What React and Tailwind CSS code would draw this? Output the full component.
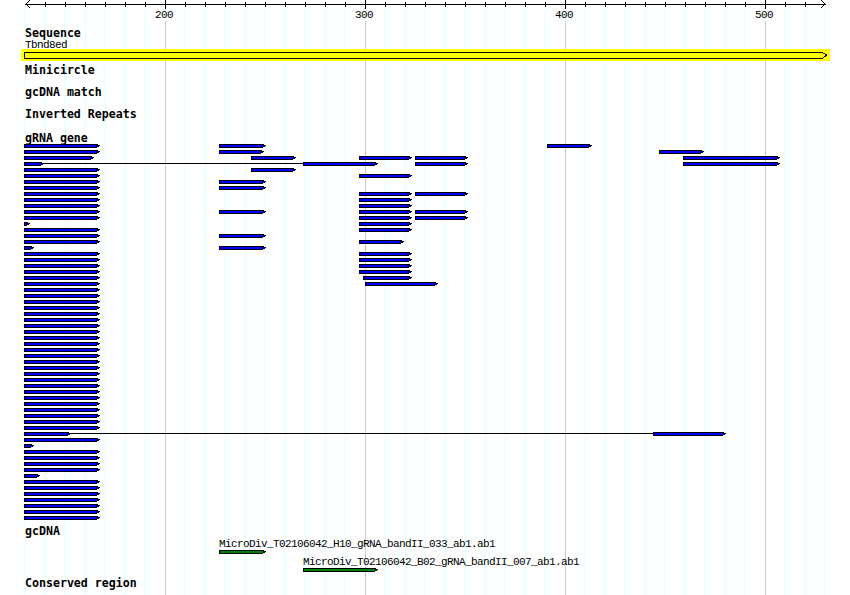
const MAJOR = [165, 365, 565, 765];
const TICK_LABELS = [
    { x: 165, text: "200" },
    { x: 365, text: "300" },
    { x: 565, text: "400" },
    { x: 765, text: "500" },
];

// every 20px between the ruler's two ends
const GRID = Array.from({ length: 41 }, (_, i) => 25 + i * 20);

const ROWS = 63;
const ROW_STEP = 6;
const LEFT_FULL = 100;
// rows where the first feature stops short of the full width
const LEFT_SHORT = { 2: 94, 3: 44, 13: 30, 17: 34, 48: 71, 50: 34, 55: 40 };

// [row, start, tip]
const FEATURES = [
    [0, 219, 266], [0, 547, 592],
    [1, 219, 264], [1, 659, 704],
    [2, 251, 296], [2, 359, 412], [2, 415, 468], [2, 683, 780],
    [3, 303, 378], [3, 415, 468], [3, 683, 780],
    [4, 251, 296],
    [5, 359, 412],
    [6, 219, 266],
    [7, 219, 266],
    [8, 359, 412], [8, 415, 468],
    [9, 359, 412],
    [10, 359, 412],
    [11, 219, 266], [11, 359, 412], [11, 415, 468],
    [12, 359, 412], [12, 415, 468],
    [13, 359, 412],
    [14, 359, 412],
    [15, 219, 266],
    [16, 359, 404],
    [17, 219, 266],
    [18, 359, 412],
    [19, 359, 412],
    [20, 359, 412],
    [21, 359, 412],
    [22, 363, 412],
    [23, 365, 438],
    [48, 653, 726],
];

// [row, from, to]
const CONNECTORS = [
    [3, 44, 303],
    [48, 71, 653],
];

const Feature = ({ y, start, tip, fill }) => (
    <g>
        <rect x={start} y={y} width={tip - start - 2} height={1} fill="#000000" />
        <rect x={start} y={y + 3} width={tip - start - 3} height={1} fill="#000000" />
        <rect x={start} y={y + 1} width={1} height={2} fill="#000000" />
        <rect x={start + 1} y={y + 1} width={tip - start - 4} height={2} fill={fill} />
        <rect x={tip - 3} y={y + 1} width={2} height={2} fill="#000000" />
        <rect x={tip - 1} y={y + 1} width={1} height={1} fill="#000000" />
    </g>
);

const TrackLabel = ({ children, className = "" }) => (
    <div className={`pl-[25px] h-[14px] leading-[14px] text-[11.6px] font-bold text-black whitespace-pre ${className}`}>
        {children}
    </div>
);

const SmallLabel = ({ x, children, className = "" }) => (
    <div
        className={`h-[12px] leading-[12px] font-['Liberation_Mono',monospace] text-[11px] tracking-[-0.6px] text-black whitespace-pre ${className}`}
        style={{ paddingLeft: x }}
    >
        {children}
    </div>
);

const GreenBar = ({ start, tip }) => (
    <svg width="850" height="4" className="block" shapeRendering="crispEdges">
        <Feature y={0} start={start} tip={tip} fill="#008000" />
    </svg>
);

const App = () => {
    const rows = Array.from({ length: ROWS }, (_, i) => i);

    return (
        <div className="relative w-[850px] h-[595px] bg-white overflow-hidden font-['DejaVu_Sans_Mono',monospace]">
            {/* grid lines and the scale behind all the tracks */}
            <svg width="850" height="595" className="absolute inset-0" shapeRendering="crispEdges">
                {GRID.map((x) => (
                    <rect key={x} x={x} y={6} width={1} height={589} fill="#e0ffff" />
                ))}
                {MAJOR.map((x) => (
                    <rect key={x} x={x} y={21} width={1} height={574} fill="#cccccc" />
                ))}
                <rect x={25} y={4} width={801} height={1} fill="#000000" />
                {GRID.slice(1, -1).map((x) => (
                    <rect key={x} x={x} y={2} width={1} height={5} fill="#000000" />
                ))}
                {MAJOR.map((x) => (
                    <rect key={x} x={x} y={0} width={1} height={9} fill="#000000" />
                ))}
                <polyline points="30,0 26,4 30,8" fill="none" stroke="#000000" />
                <polyline points="821,0 825,4 821,8" fill="none" stroke="#000000" />
                {TICK_LABELS.map((t) => (
                    <text
                        key={t.x}
                        x={t.x - 1}
                        y={18}
                        textAnchor="middle"
                        fill="#000000"
                        className="font-['Liberation_Mono',monospace] text-[11px] tracking-[-0.6px]"
                    >
                        {t.text}
                    </text>
                ))}
            </svg>

            <div className="relative flex flex-col pt-[26px]">
                <TrackLabel>Sequence</TrackLabel>
                <div className="pl-[25px] h-[9px] leading-[11px] font-['Liberation_Mono',monospace] text-[11px] tracking-[-0.6px] text-black">
                    Tbnd8ed
                </div>

                <div className="ml-[21px] w-[809px] h-[12px] bg-[#ffff00]">
                    <svg width="809" height="12" className="block" shapeRendering="crispEdges">
                        <polygon
                            points="3.5,3.5 801.5,3.5 805.5,6 801.5,9.5 3.5,9.5"
                            fill="#ffff00"
                            stroke="#000000"
                        />
                    </svg>
                </div>

                <TrackLabel className="mt-[2px]">Minicircle</TrackLabel>
                <TrackLabel className="mt-[8px]">gcDNA match</TrackLabel>
                <TrackLabel className="mt-[8px]">Inverted Repeats</TrackLabel>
                <TrackLabel className="mt-[10px] mb-[-1px]">gRNA gene</TrackLabel>

                <svg width="850" height={ROWS * ROW_STEP} className="relative block" shapeRendering="crispEdges">
                    {CONNECTORS.map(([row, from, to]) => (
                        <rect key={row} x={from} y={row * ROW_STEP + 1} width={to - from} height={1} fill="#000000" />
                    ))}
                    {rows.map((row) => (
                        <Feature
                            key={row}
                            y={row * ROW_STEP}
                            start={24}
                            tip={LEFT_SHORT[row] ?? LEFT_FULL}
                            fill="#0000ff"
                        />
                    ))}
                    {FEATURES.map(([row, start, tip]) => (
                        <Feature key={`${row}-${start}`} y={row * ROW_STEP} start={start} tip={tip} fill="#0000ff" />
                    ))}
                </svg>

                <TrackLabel className="mt-[2px]">gcDNA</TrackLabel>
                <SmallLabel x={219}>MicroDiv_T02106042_H10_gRNA_bandII_033_ab1.ab1</SmallLabel>
                <GreenBar start={219} tip={266} />
                <SmallLabel x={303} className="mt-[2px]">MicroDiv_T02106042_B02_gRNA_bandII_007_ab1.ab1</SmallLabel>
                <GreenBar start={303} tip={378} />
                <TrackLabel className="mt-[4px]">Conserved region</TrackLabel>
            </div>
        </div>
    );
};

export default App;
